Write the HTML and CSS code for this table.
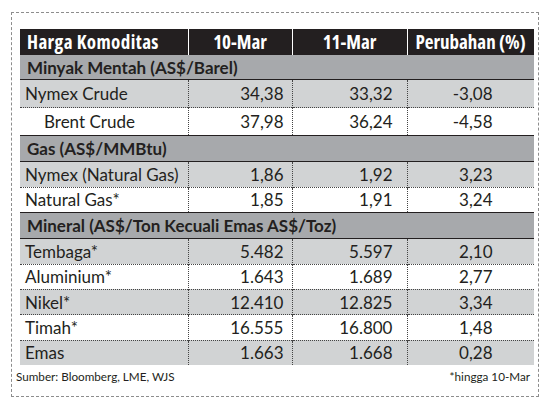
FILE: index.html
```html
<!DOCTYPE html>
<html lang="en">
<head>
<meta charset="UTF-8">
<title>Harga Komoditas</title>
<link rel="stylesheet" href="styles.css">
</head>
<body>

<div class="box">
  <table class="prices">
    <thead>
      <tr>
        <th class="name">Harga Komoditas</th>
        <th>10-Mar</th>
        <th>11-Mar</th>
        <th>Perubahan (%)</th>
      </tr>
    </thead>
    <tbody>
      <tr class="group first"><td colspan="4">Minyak Mentah (AS$/Barel)</td></tr>
      <tr class="shade tall"><td class="name">Nymex Crude</td><td>34,38</td><td>33,32</td><td>-3,08</td></tr>
      <tr class="tall"><td class="name indent">Brent Crude</td><td>37,98</td><td>36,24</td><td>-4,58</td></tr>

      <tr class="group"><td colspan="4">Gas (AS$/MMBtu)</td></tr>
      <tr class="shade"><td class="name">Nymex (Natural Gas)</td><td>1,86</td><td>1,92</td><td>3,23</td></tr>
      <tr><td class="name">Natural Gas*</td><td>1,85</td><td>1,91</td><td>3,24</td></tr>

      <tr class="group"><td colspan="4">Mineral (AS$/Ton Kecuali Emas AS$/Toz)</td></tr>
      <tr class="shade"><td class="name">Tembaga*</td><td>5.482</td><td>5.597</td><td>2,10</td></tr>
      <tr><td class="name">Aluminium*</td><td>1.643</td><td>1.689</td><td>2,77</td></tr>
      <tr class="shade"><td class="name">Nikel*</td><td>12.410</td><td>12.825</td><td>3,34</td></tr>
      <tr><td class="name">Timah*</td><td>16.555</td><td>16.800</td><td>1,48</td></tr>
      <tr class="shade"><td class="name">Emas</td><td>1.663</td><td>1.668</td><td>0,28</td></tr>
    </tbody>
  </table>

  <div class="notes">
    <span>Sumber: Bloomberg, LME, WJS</span>
    <span>*hingga 10-Mar</span>
  </div>
</div>

</body>
</html>
```

FILE: styles.css
```css
body {
  margin: 0;
  padding: 12px 0 0 11px;
  background: #fff;
  color: #231f20;
  font-family: Lato, "Open Sans", sans-serif;
}

.box {
  width: 528px;
  height: 385px;
  border: 1px dashed #8d8d8d;
  padding: 16px 8px 0 8px;
  box-sizing: border-box;
}

/* tabel harga */
.prices {
  width: 511px;
  border-collapse: collapse;
  table-layout: fixed;
}
.prices th, .prices td { padding: 0; }

.prices th {
  background: #231f20;
  color: #fff;
  font-family: "Open Sans", sans-serif;
  font-weight: bold;
  font-size: 19px;
  font-stretch: 75%;
  height: 26px;
  line-height: 1;
  white-space: nowrap;
  text-align: center;
  border-left: 1px solid #fff;
}
.prices th:first-child { border-left: none; }
.prices th.name { width: 168px; text-align: left; padding-left: 7px; letter-spacing: 0.4px; box-sizing: border-box; }
.prices th:nth-child(2) { width: 103px; }
.prices th:nth-child(3) { width: 114px; }
.prices th:nth-child(4) { width: 126px; }

.prices td {
  font-size: 17px;
  height: 24.4px;
  line-height: 1;
  text-align: right;
  white-space: nowrap;
  border-top: 1px dotted #444;
  border-left: 1px dotted #444;
}
.prices td:first-child { border-left: none; }
.prices td:nth-child(2) { padding-right: 8px; }
.prices td:nth-child(3) { padding-right: 14px; }
.prices td:nth-child(4) { padding-right: 41px; }
.prices td.name { text-align: left; padding-left: 5px; }
.prices td.indent { padding-left: 24px; }

.prices tr.shade td { background: #d1d3d4; }
.prices tr.tall td { height: 27px; }

.prices tr.group td {
  background: #a7a9ac;
  border-top: 1px solid #231f20;
  border-bottom: 1px solid #231f20;
  text-align: left;
  padding-left: 7px;
  font-weight: bold;
  font-size: 17px;
  height: 25.2px;
}
.prices tr.group.first td { border-top: none; height: 24px; }

.notes {
  display: flex;
  justify-content: space-between;
  padding: 4px 0 0 0;
  margin-left: -4px;
  font-size: 11.7px;
}
```
